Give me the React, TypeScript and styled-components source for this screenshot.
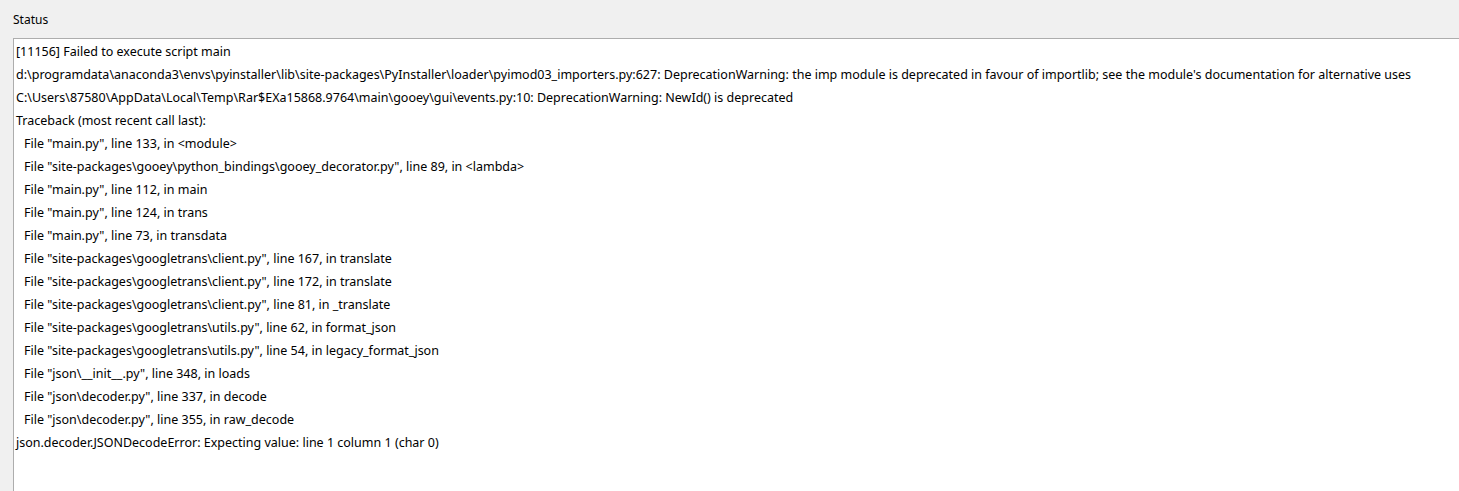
import React from "react";
import styled, { createGlobalStyle } from "styled-components";

const Global = createGlobalStyle`
  html, body { margin: 0; padding: 0; height: 100%; }
  body { background: #f0f0f0; font-family: "Noto Sans", "Liberation Sans", sans-serif; }
  #root { height: 100%; }
`;

const Page = styled.div`
  display: flex;
  flex-direction: column;
  height: 491px;
  background: #f0f0f0;
  overflow: hidden;
`;

const Title = styled.div`
  height: 38px;
  padding-left: 13px;
  box-sizing: border-box;
  display: flex;
  align-items: center;
  font-size: 12px;
  color: #000;
`;

const Console = styled.div`
  flex: 1;
  margin-left: 13px;
  background: #fff;
  border-top: 1px solid #adadad;
  border-left: 1px solid #adadad;
  padding: 1px 0 0 2px;
`;

const Line = styled.div<{ $indent?: boolean }>`
  height: 23px;
  line-height: 23px;
  font-size: 12.5px;
  color: #000;
  white-space: pre;
  padding-left: ${(p) => (p.$indent ? "8px" : "0")};
`;

const lines: [string, boolean][] = [
  ["[11156] Failed to execute script main", false],
  ["d:\\programdata\\anaconda3\\envs\\pyinstaller\\lib\\site-packages\\PyInstaller\\loader\\pyimod03_importers.py:627: DeprecationWarning: the imp module is deprecated in favour of importlib; see the module's documentation for alternative uses", false],
  ["C:\\Users\\87580\\AppData\\Local\\Temp\\Rar$EXa15868.9764\\main\\gooey\\gui\\events.py:10: DeprecationWarning: NewId() is deprecated", false],
  ["Traceback (most recent call last):", false],
  ["File \"main.py\", line 133, in <module>", true],
  ["File \"site-packages\\gooey\\python_bindings\\gooey_decorator.py\", line 89, in <lambda>", true],
  ["File \"main.py\", line 112, in main", true],
  ["File \"main.py\", line 124, in trans", true],
  ["File \"main.py\", line 73, in transdata", true],
  ["File \"site-packages\\googletrans\\client.py\", line 167, in translate", true],
  ["File \"site-packages\\googletrans\\client.py\", line 172, in translate", true],
  ["File \"site-packages\\googletrans\\client.py\", line 81, in _translate", true],
  ["File \"site-packages\\googletrans\\utils.py\", line 62, in format_json", true],
  ["File \"site-packages\\googletrans\\utils.py\", line 54, in legacy_format_json", true],
  ["File \"json\\__init__.py\", line 348, in loads", true],
  ["File \"json\\decoder.py\", line 337, in decode", true],
  ["File \"json\\decoder.py\", line 355, in raw_decode", true],
  ["json.decoder.JSONDecodeError: Expecting value: line 1 column 1 (char 0)", false],
];

export default function App() {
  return (
    <Page>
      <Global />
      <Title>Status</Title>
      <Console>
        {lines.map(([t, ind], i) => (
          <Line key={i} $indent={ind}>{t}</Line>
        ))}
      </Console>
    </Page>
  );
}
